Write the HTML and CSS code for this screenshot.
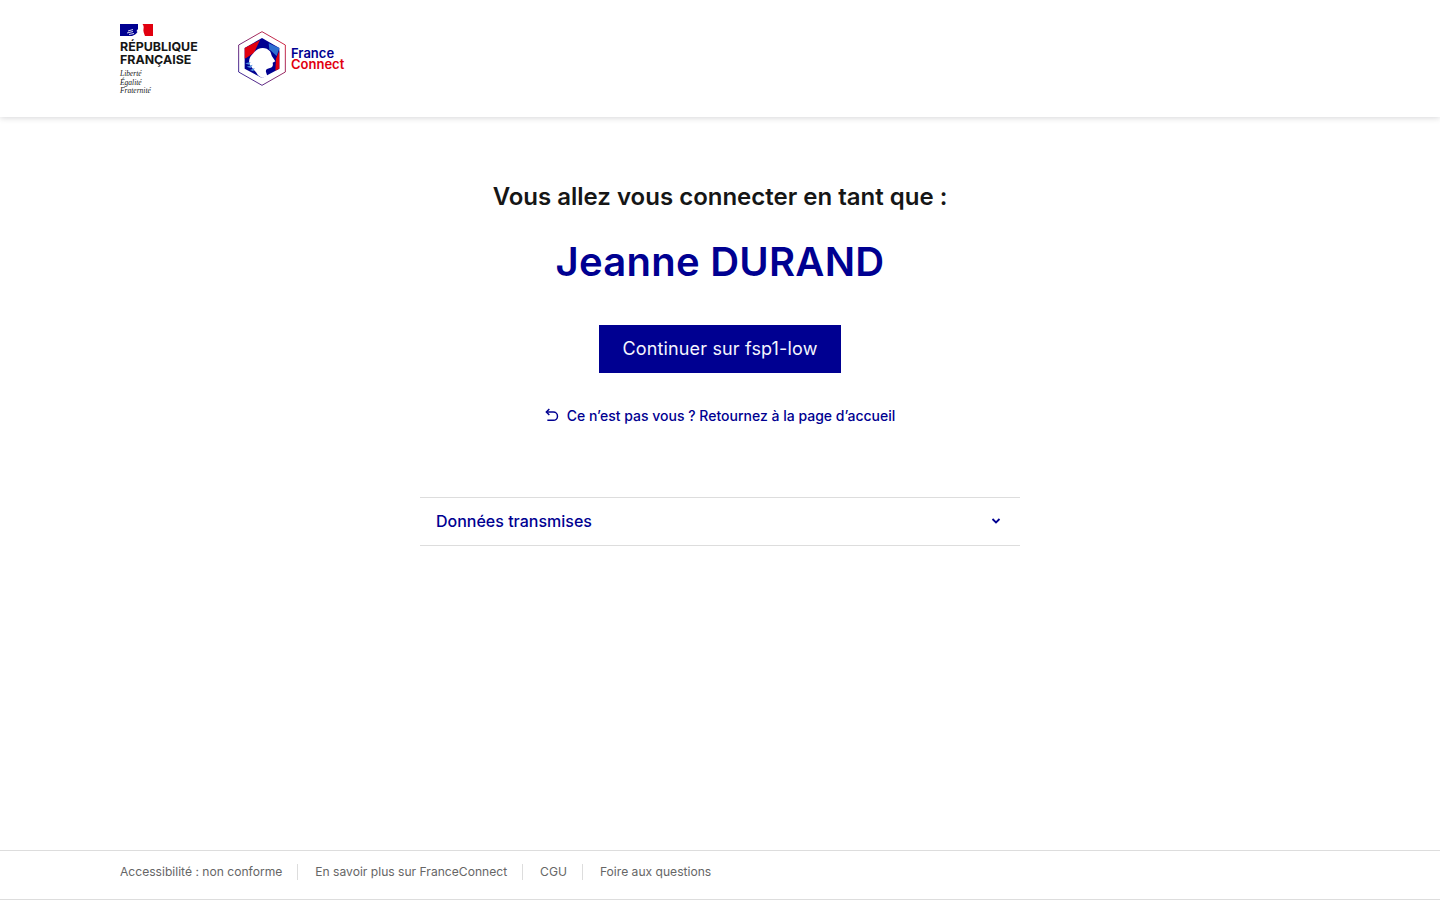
FILE: index.html
```html
<!DOCTYPE html>
<html lang="fr">
<head>
<meta charset="utf-8">
<title>FranceConnect</title>
<link rel="stylesheet" href="styles.css">
</head>
<body>
<div class="page">
<header class="header">
  <div class="brand-rf">
    <svg class="flag" width="33" height="12" viewBox="0 0 33 12">
      <rect width="33" height="12" fill="#fff"/>
      <rect width="18" height="12" fill="#000091"/>
      <rect x="22" width="11" height="12" fill="#e1000f"/>
      <path d="M20 0 C18.500 1 18.500 3 18 5 L16.500 7 L17.500 8 C16.500 10 14 11 12 12 L25 12 C24 9 23 7 23.500 5 C24 3 23.500 1 22.500 0 Z" fill="#fff"/>
      <path d="M8 7 L13 5.500 M7 9 L13 7.500 M9 10.500 L14 9.500" stroke="#d5d5f0" stroke-width="1"/>
    </svg>
    <div class="rf-name">RÉPUBLIQUE<br>FRANÇAISE</div>
    <div class="rf-motto">Liberté<br>Égalité<br>Fraternité</div>
  </div>
  <div class="brand-fc">
    <svg class="hex" width="48" height="55" viewBox="24 17 144 165">
      <defs>
        <linearGradient id="hexline" x1="0" y1="1" x2="1" y2="0">
          <stop offset="0" stop-color="#000091"/>
          <stop offset="1" stop-color="#e1000f"/>
        </linearGradient>
      </defs>
      <path d="M96 19 L166 59 L166 140 L96 180 L26 140 L26 59 Z" fill="#fff" stroke="url(#hexline)" stroke-width="2.500"/>
      <path d="M96 38 L148 68 L148 130 L96 158 L44 130 L44 68 Z" fill="#000091"/>
      <path d="M44 68 L90 44 L72 82 L52 96 L44 100 Z" fill="#e1000f"/>
      <path d="M116 54 L148 68 L140 92 L118 72 Z" fill="#2f6fd0"/>
      <path d="M148 76 L148 130 L136 136 L138 100 Z" fill="#e1000f"/>
      <path d="M70 84 C84 64 108 64 120 78 C124 84 124 92 128 96 L136 108 L128 112 C130 120 128 126 120 128 C112 130 106 132 108 140 L112 152 L96 158 L84 150 C78 138 64 128 58 116 C55 100 62 92 70 84 Z" fill="#fff"/>
      <path d="M46 114 L62 110 L56 118 Z M50 124 L68 118 L62 128 Z M60 134 L74 128 L70 138 Z" fill="#4f8fe0"/>
    </svg>
    <div class="fc-name"><span class="fc-france">France</span><span class="fc-connect">Connect</span></div>
  </div>
</header>
<main class="main">
  <h1 class="intro">Vous allez vous connecter en tant que :</h1>
  <p class="identity">Jeanne DURAND</p>
  <a class="btn" href="#">Continuer sur fsp1-low</a>
  <a class="back" href="#">
    <svg width="16" height="16" viewBox="0 0 24 24" fill="none" stroke="#000091" stroke-width="2.200">
      <path d="M8 3 L3.500 7.500 L8 12"/>
      <path d="M4 7.500 H14 A6.250 6.250 0 0 1 14 20 H5"/>
    </svg>
    <span>Ce n’est pas vous ? Retournez à la page d’accueil</span>
  </a>
  <section class="accordion">
    <div class="acc-head">
      <span>Données transmises</span>
      <svg width="16" height="16" viewBox="0 0 16 16" fill="none" stroke="#000091" stroke-width="1.800">
        <path d="M4.500 6 L8 9.500 L11.500 6"/>
      </svg>
    </div>
  </section>
</main>
<footer class="footer">
  <a href="#">Accessibilité : non conforme</a>
  <a href="#">En savoir plus sur FranceConnect</a>
  <a href="#">CGU</a>
  <a href="#">Foire aux questions</a>
</footer>
</div>
</body>
</html>
```
FILE: styles.css
```css
* { box-sizing: border-box; }
html, body { margin: 0; height: 100%; }
body { font-family: "Inter", "Noto Sans", sans-serif; background: #fff; color: #161616; }
a { text-decoration: none; color: inherit; }
.page { height: 900px; display: flex; flex-direction: column; overflow: hidden; }
.header { height: 117px; flex: none; display: flex; align-items: flex-start; padding: 24px 120px 0; box-shadow: 0 1px 6px rgba(0,0,18,.16); }
.brand-rf { width: 118px; display: flex; flex-direction: column; }
.flag { display: block; }
.rf-name { margin-top: 4px; font-weight: 700; font-size: 12.400px; line-height: 13px; color: #161616; white-space: nowrap; }
.rf-motto { margin-top: 4px; font-family: "Liberation Serif", serif; font-style: italic; font-size: 7.500px; line-height: 8.500px; color: #161616; }
.brand-fc { display: flex; align-items: center; margin-top: 7px; }
.hex { display: block; margin-right: 5px; }
.fc-name { display: flex; flex-direction: column; font-weight: 600; font-size: 13px; line-height: 11px; }
.fc-france { color: #000091; }
.fc-connect { color: #e1000f; }
.main { flex: 1; display: flex; flex-direction: column; align-items: center; padding-top: 64px; }
.intro { margin: 0; font-size: 24px; line-height: 32px; font-weight: 600; color: #161616; }
.identity { margin: 25px 0 39px; font-size: 40px; line-height: 48px; font-weight: 600; letter-spacing: .25px; color: #000091; }
.btn { width: 242px; height: 48px; padding-bottom: 1px; display: flex; align-items: center; justify-content: center; background: #000091; color: #f5f5fe; font-size: 18px; font-weight: 400; letter-spacing: .15px; }
.back { margin-top: 30px; margin-left: -1px; height: 24px; display: flex; align-items: center; gap: 7px; color: #000091; font-size: 14px; font-weight: 500; }
.accordion { margin-top: 70px; width: 600px; border-top: 1px solid #ddd; border-bottom: 1px solid #ddd; }
.acc-head { height: 47px; padding: 0 16px 2px; display: flex; align-items: center; justify-content: space-between; color: #000091; font-size: 16px; font-weight: 500; }
.footer { height: 50px; flex: none; display: flex; align-items: center; padding: 0 120px 6px; border-top: 1px solid #ddd; border-bottom: 1px solid #ddd; font-size: 12.100px; color: #666; }
.footer a { padding: 0 15px 0 17px; border-left: 1px solid #ddd; line-height: 16px; }
.footer a:first-child { padding-left: 0; border-left: 0; }
```
